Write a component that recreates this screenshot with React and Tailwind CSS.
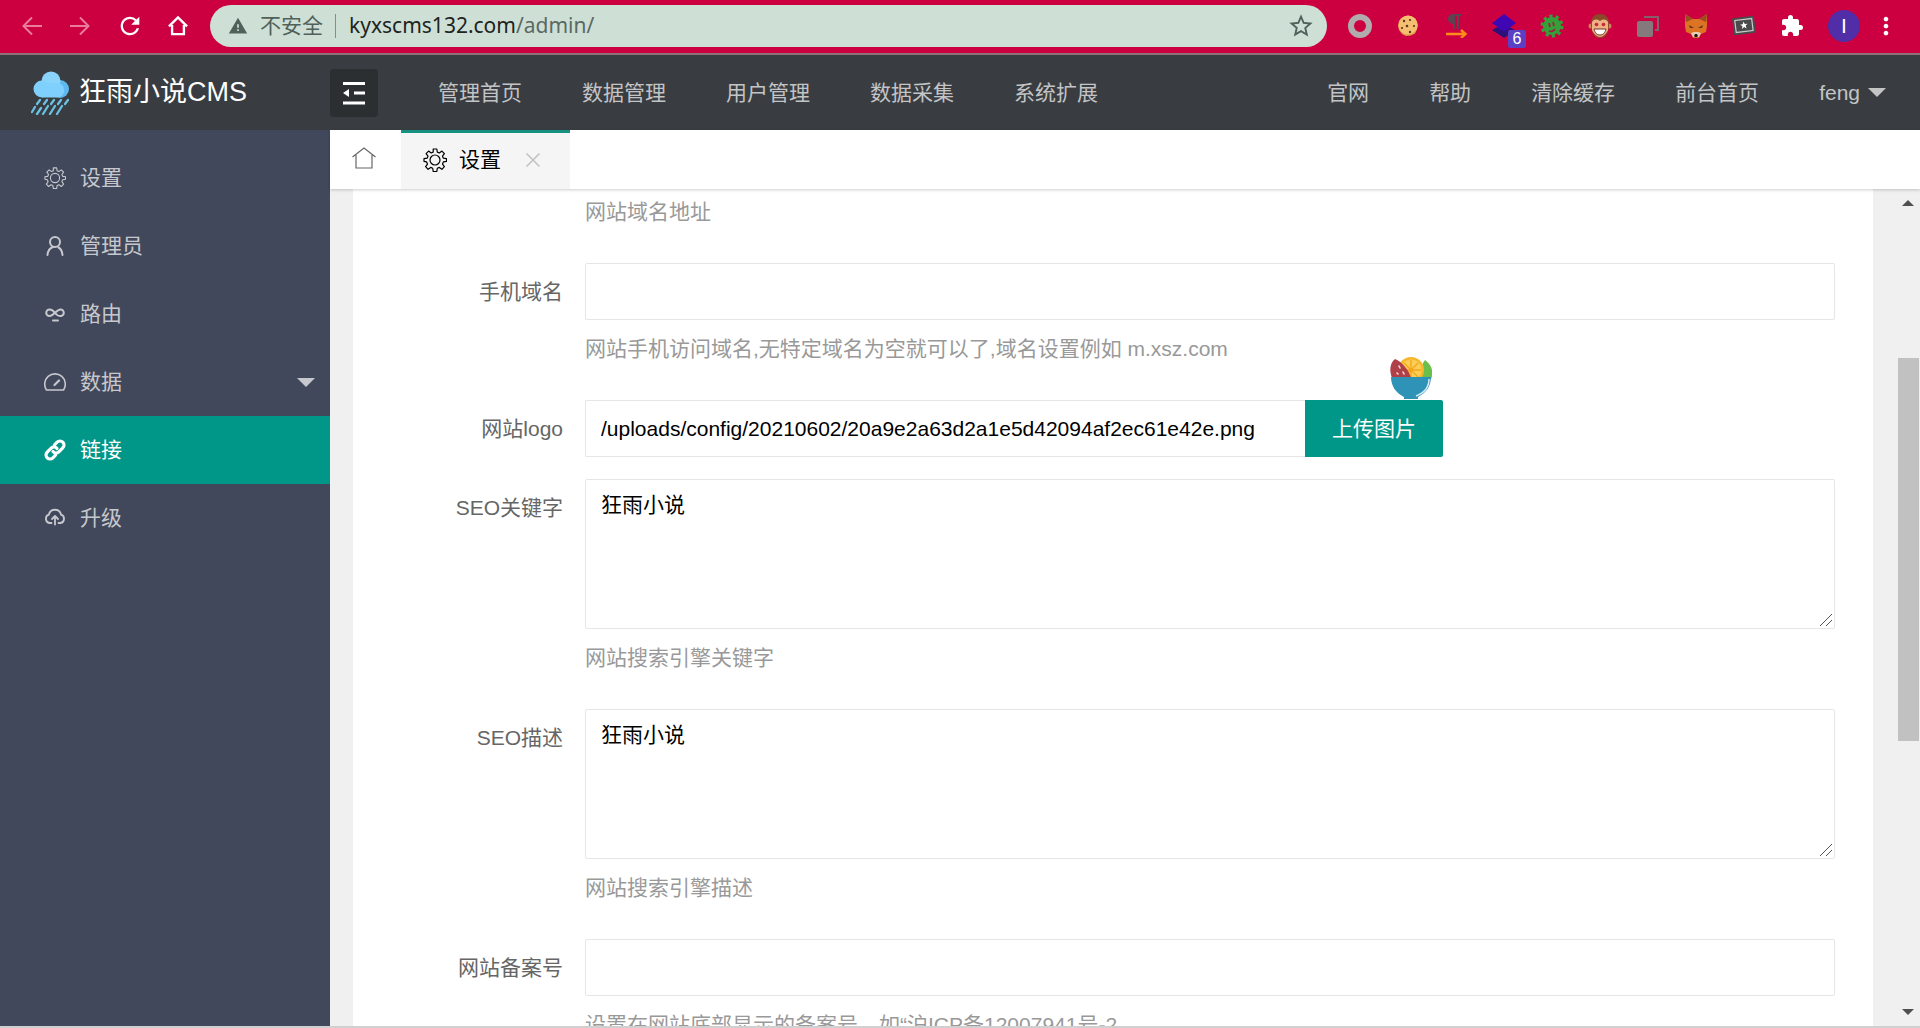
import React from 'react';
import { MdExtension, MdRefresh, MdStarBorder, MdWarning, MdMoreVert } from 'react-icons/md';

const topNav = ['管理首页', '数据管理', '用户管理', '数据采集', '系统扩展'];
const rightNav = ['官网', '帮助', '清除缓存', '前台首页'];

function GearIcon({ className }) {
  return (
    <svg viewBox="0 0 24 24" fill="none" stroke="currentColor" strokeWidth="1.2" className={className} aria-hidden="true">
      <circle cx="12" cy="12" r="5" />
      <path
        strokeLinejoin="round"
        d="M10.2 1h3.6l.5 3.1 2 .9 2.6-1.9 2.5 2.5-1.9 2.6.9 2 3.1.5v2.6l-3.1.6-.9 2.2 1.9 2.6-2.5 2.6-2.6-1.9-2 .9-.5 3.2h-3.6l-.5-3.2-2-.9-2.6 1.9-2.5-2.6 1.9-2.6-.9-2.2L1 13.3v-2.6l3.1-.5.9-2-1.9-2.6 2.5-2.5 2.6 1.9 2-.9z"
      />
    </svg>
  );
}

function AdminIcon({ className }) {
  return (
    <svg viewBox="0 0 22 22" fill="none" stroke="currentColor" strokeWidth="2" strokeLinecap="round" className={className} aria-hidden="true">
      <circle cx="11" cy="7" r="5" />
      <path d="M3.5 20c.4-4 2.3-7 5.5-8M18.5 20c-.4-4-2-6.5-4-7.5" />
    </svg>
  );
}

function RouteIcon({ className }) {
  return (
    <svg viewBox="0 0 22 22" fill="none" stroke="currentColor" strokeWidth="2" strokeLinecap="round" className={className} aria-hidden="true">
      <path d="M11 10C9 7 7.5 6.5 5.5 6.5a3.3 3.3 0 0 0 0 6.6c4 0 7-6.6 11-6.6a3.3 3.3 0 0 1 0 6.6c-2 0-3.5-.6-5.5-3.1" />
      <path d="M9 17.5h5" />
    </svg>
  );
}

function GaugeIcon({ className }) {
  return (
    <svg viewBox="0 0 22 22" fill="none" stroke="currentColor" strokeWidth="1.6" strokeLinecap="round" className={className} aria-hidden="true">
      <path d="M2.5 19A10.3 10.3 0 1 1 19.5 19z" strokeLinejoin="round" />
      <path d="M10.5 14l4.5-4.5" strokeWidth="2.2" />
    </svg>
  );
}

function ChainIcon({ className }) {
  return (
    <svg viewBox="0 0 22 22" fill="none" stroke="currentColor" strokeWidth="3.2" strokeLinecap="round" className={className} aria-hidden="true">
      <path d="M9 12.5a3.8 3.8 0 0 0 5.8.4l4-4a4 4 0 0 0-5.7-5.7l-2.6 2.6" />
      <path d="M13 9.5a3.8 3.8 0 0 0-5.8-.4l-4 4a4 4 0 0 0 5.7 5.7l2.6-2.6" />
    </svg>
  );
}

function CloudUpIcon({ className }) {
  return (
    <svg viewBox="0 0 22 22" fill="none" stroke="currentColor" strokeWidth="1.8" strokeLinecap="round" strokeLinejoin="round" className={className} aria-hidden="true">
      <path d="M7.5 16H5.5a4.3 4.3 0 0 1-.7-8.3 6.3 6.3 0 0 1 12.3 0 4.3 4.3 0 0 1-.6 8.3h-2" />
      <path d="M11 17.5V9M8 12l3-3 3 3" />
    </svg>
  );
}

function RainLogo() {
  return (
    <svg viewBox="0 0 40 44" className="h-11 w-10 shrink-0" aria-hidden="true">
      <circle cx="29" cy="18" r="9" fill="#5db9ee" />
      <circle cx="20" cy="10" r="9.5" fill="#8ad4fb" />
      <circle cx="11" cy="18" r="8.5" fill="#7fd0fc" />
      <path d="M11 12h15a7 7 0 0 1 0 14.5H11z" fill="#7fd0fc" />
      <g stroke="#6cc0e2" strokeWidth="2.3" strokeLinecap="round">
        <path d="M9 29l-3 4M16 29l-3 4M23 29l-3 4M30 29l-3 4M37 29l-3 4" />
        <path d="M4 36l-3 5M10 37l-4 6M17 35l-5 8M24 35l-5 8M31 35l-5 8" />
      </g>
    </svg>
  );
}

function FruitBowl({ className }) {
  return (
    <svg viewBox="0 0 42 43" className={className} aria-hidden="true">
      <path d="M35 4c7 5 9 12 6 19h-9c-2-9 0-15 3-19z" fill="#6bbf4b" />
      <circle cx="21" cy="14" r="13" fill="#f8b62b" />
      <circle cx="21" cy="14" r="10.5" fill="#fbcf56" />
      <path d="M21 4v20M11 14h20M14 7l14 14M28 7L14 21" stroke="#f4a51c" strokeWidth="1.3" />
      <path d="M5 3c7 3 14 11 16 19H2C-1 14 0 7 5 3z" fill="#b04048" />
      <path d="M9 10l1 2M7 17l1 1M13 16l1 2" stroke="#f6dada" strokeWidth="1.6" strokeLinecap="round" />
      <path d="M1 21h40c0 9-5 16-13 20v2H14v-2C6 37 1 30 1 21z" fill="#2f93b8" />
      <path d="M39 23c0 8-5 14-13 17" stroke="#d5edf6" strokeWidth="1.5" fill="none" />
    </svg>
  );
}

const sideMenu = [
  { icon: GearIcon, title: '设置' },
  { icon: AdminIcon, title: '管理员' },
  { icon: RouteIcon, title: '路由' },
  { icon: GaugeIcon, title: '数据', more: true },
  { icon: ChainIcon, title: '链接', active: true },
  { icon: CloudUpIcon, title: '升级' }
];

function BrowserBar() {
  return (
    <div className="flex h-[55px] shrink-0 items-center border-b-2 border-[#8d7279] bg-[#cc0040] pb-1 pt-[3px] text-white">
      <div className="flex items-center gap-6 pl-5 pr-[22px]">
        <button aria-label="Back" className="text-[#eb7b9c]">
          <svg viewBox="0 0 24 24" className="h-6 w-6" fill="none" stroke="currentColor" strokeWidth="2">
            <path d="M22 12H4M12 3.5L3.5 12l8.5 8.5" />
          </svg>
        </button>
        <button aria-label="Forward" className="text-[#eb7b9c]">
          <svg viewBox="0 0 24 24" className="h-6 w-6" fill="none" stroke="currentColor" strokeWidth="2">
            <path d="M2 12h18M12 3.5l8.5 8.5-8.5 8.5" />
          </svg>
        </button>
        <button aria-label="Reload">
          <MdRefresh className="h-7 w-7" />
        </button>
        <button aria-label="Home">
          <svg viewBox="0 0 22 22" className="h-6 w-5" fill="none" stroke="currentColor" strokeWidth="2.6">
            <path d="M1 11.5L11 1.5l10 10M4.5 10v10h13V10" />
          </svg>
        </button>
      </div>

      <div className="flex h-[42px] flex-1 items-center rounded-full bg-[#cee0d6] pl-[18px] pr-3">
        <MdWarning className="h-5 w-5 text-[#50605a]" />
        <span className="ml-3 text-[#50605a]">不安全</span>
        <span className="ml-3 mr-[13px] h-6 w-px bg-[#82908a]" />
        <span className="flex-1 font-['Noto_Sans','Noto_Sans_CJK_SC',sans-serif] text-[#1d2421]">
          kyxscms132.com<span className="text-[#5b6963]">/admin/</span>
        </span>
        <button aria-label="Bookmark" className="text-[#50605a]">
          <MdStarBorder className="h-7 w-7" />
        </button>
      </div>

      <div className="flex items-center gap-6 pl-[21px] pr-5">
        <svg viewBox="0 0 24 24" className="h-6 w-6">
          <circle cx="12" cy="12" r="9" fill="none" stroke="#b1abae" strokeWidth="6" />
        </svg>
        <svg viewBox="0 0 24 24" className="h-6 w-6">
          <path d="M12 1.5l4 1 3 2 2 3 1 4-1 4-2 4-4 2-5 .5-4-2-3-4-1-4 1-5 4-4z" fill="#e09a48" />
          <circle cx="12" cy="11" r="9.5" fill="#f5bf72" />
          <g fill="#60351c">
            <circle cx="8" cy="7" r="1.2" />
            <circle cx="14" cy="6" r="1.1" />
            <circle cx="18" cy="12" r="1.1" />
            <circle cx="11" cy="12" r="1.3" />
            <circle cx="6" cy="14" r="1.1" />
            <circle cx="14" cy="18" r="1.2" />
          </g>
        </svg>
        <svg viewBox="0 0 24 24" className="h-6 w-6">
          <path d="M17 0H9a5 5 0 0 0 0 10v5h2V2h2v13h2V2h2z" fill="#5b4350" />
          <path d="M2 20h19M17 16l4.5 4-4.5 4" fill="none" stroke="#ff8c1a" strokeWidth="2.4" />
        </svg>
        <span className="relative">
          <svg viewBox="0 0 24 24" className="h-6 w-6">
            <path d="M0 16l11-6 12 6-11 8z" fill="#2d1178" />
            <path d="M0 9l12-9 12 9-12 9z" fill="#3f06b4" />
          </svg>
          <span className="absolute left-4 top-4 flex h-[18px] w-[18px] items-center justify-center rounded-xs bg-[#5b3fc4] text-base leading-none">
            6
          </span>
        </span>
        <svg viewBox="0 0 24 24" className="h-6 w-6">
          <circle cx="12" cy="12" r="9" fill="#35a03a" />
          <circle cx="12" cy="12" r="9.5" fill="none" stroke="#35a03a" strokeWidth="4" strokeDasharray="3 3" />
          <path d="M9 9l1 4M13 8l1 4M9 17c2 1 5 0 6-2" fill="none" stroke="#a3203c" strokeWidth="1.8" />
        </svg>
        <svg viewBox="0 0 24 24" className="h-6 w-6">
          <circle cx="3" cy="12" r="2.5" fill="#c98559" />
          <circle cx="21" cy="12" r="2.5" fill="#c98559" />
          <path d="M12 0c6 0 9 4 9 10 0 8-3 14-9 14S3 18 3 10C3 4 6 0 12 0z" fill="#8a4a2a" />
          <path d="M4 8c2-3 5-3 8-1 3-2 6-2 8 1v8c-2 4-5 7-8 7s-6-3-8-7z" fill="#edb183" />
          <path d="M6 15h12c-1 4-3 6-6 6s-5-2-6-6z" fill="#fff" stroke="#7a3324" />
          <circle cx="8.5" cy="10.5" r="1.8" fill="#c2273a" />
          <circle cx="15.5" cy="10.5" r="1.8" fill="#c2273a" />
        </svg>
        <svg viewBox="0 0 24 24" className="h-6 w-6">
          <path d="M8 3h14v13h-3" fill="none" stroke="#85606b" strokeWidth="2" />
          <rect x="1" y="7" width="16" height="16" rx="2" fill="#84797d" />
        </svg>
        <svg viewBox="0 0 24 24" className="h-6 w-6">
          <path d="M1 0l8 5h6l8-5v12l-1 6-5 2-2 4H9l-2-4-5-2-1-6z" fill="#dc7423" />
          <path d="M1 0l8 5-7 3zM23 0l-8 5 7 3z" fill="#9a4b22" />
          <path d="M5 11l5 3H6zM19 11l-5 3h4z" fill="#5a3422" />
          <path d="M7 19l3-1h4l3 1-2 4H9z" fill="#e9cdb4" />
          <path d="M11 20h2l1 2-1 1h-2l-1-1z" fill="#211c1b" />
        </svg>
        <svg viewBox="0 0 24 24" className="h-6 w-6">
          <g transform="rotate(-7 12 12)">
            <rect x="1" y="3" width="22" height="17" rx="1" fill="#4a4a4d" />
            <rect x="3.5" y="5.5" width="17" height="12" fill="none" stroke="#c9c9c9" strokeWidth="1.2" />
            <path d="M12 7.5l1 2.7h2.8l-2.2 1.7.8 2.8L12 13l-2.4 1.7.8-2.8-2.2-1.7H11z" fill="#fff" />
          </g>
        </svg>
        <button aria-label="Extensions">
          <MdExtension className="h-6 w-6" />
        </button>
        <button className="flex h-8 w-8 items-center justify-center rounded-full bg-[#512da8]">I</button>
        <button aria-label="Menu" className="-ml-3">
          <MdMoreVert className="h-7 w-7" />
        </button>
      </div>
    </div>
  );
}

function Header() {
  return (
    <header className="flex h-[75px] shrink-0 items-center bg-[#393d41] text-[#c3c4c6]">
      <div className="flex w-[330px] shrink-0 items-center gap-2 pl-[31px] text-[27px] text-white">
        <RainLogo />
        <a href="#">狂雨小说CMS</a>
      </div>
      <button aria-label="Toggle menu" className="flex h-12 w-12 items-center justify-center rounded-sm bg-[#2b2f32] text-white">
        <svg viewBox="0 0 24 24" className="h-6 w-6" fill="none" stroke="currentColor" strokeWidth="3">
          <path d="M1 2.5h22M12 12h11M1 22h22" />
          <path d="M1 12l6-4v8z" fill="currentColor" stroke="none" />
        </svg>
      </button>
      <nav className="ml-[30px] flex flex-1">
        {topNav.map((item) => (
          <a key={item} href="#" className="px-[30px]">{item}</a>
        ))}
      </nav>
      <nav className="flex pr-1">
        {rightNav.map((item) => (
          <a key={item} href="#" className="px-[30px]">{item}</a>
        ))}
        <a href="#" className="flex items-center gap-2 px-[30px]">
          feng
          <span className="border-x-9 border-t-9 border-x-transparent border-t-[#c3c4c6]" />
        </a>
      </nav>
    </header>
  );
}

function Sidebar() {
  return (
    <aside className="w-[330px] shrink-0 bg-[#42485b] pt-[14px] text-[#c6c8ce]">
      {sideMenu.map((item) => (
        <a
          key={item.title}
          href="#"
          className={
            item.active
              ? 'flex h-[68px] items-center bg-[#009688] pl-[44px] pr-[15px] text-white'
              : 'flex h-[68px] items-center pl-[44px] pr-[15px]'
          }
        >
          <item.icon className="mr-[14px] h-[22px] w-[22px]" />
          <span className="flex-1">{item.title}</span>
          {item.more && <span className="border-x-9 border-t-9 border-x-transparent border-t-[#c6c8ce]" />}
        </a>
      ))}
    </aside>
  );
}

function Tabs() {
  return (
    <div className="relative z-10 flex h-[59px] shrink-0 bg-white text-black shadow-[0_1px_3px_rgba(0,0,0,0.2)]">
      <button aria-label="Home" className="flex w-[71px] items-center justify-center pb-1 pr-1 text-[#666]">
        <svg viewBox="0 0 24 24" className="h-6 w-6" fill="none" stroke="currentColor" strokeWidth="1.2">
          <path d="M.5 11L12 2l11.5 9M4 9v13h16V9" />
        </svg>
      </button>
      <div className="flex items-center border-t-3 border-[#189280] bg-[#f5f5f5] pb-[3px] pl-[22px] pr-[29px]">
        <GearIcon className="mr-3 h-6 w-6" />
        <span>设置</span>
        <button aria-label="Close tab" className="ml-6 text-[#c2c2c2]">
          <svg viewBox="0 0 16 16" className="h-4 w-4" fill="none" stroke="currentColor" strokeWidth="1.6">
            <path d="M1.5 1.5l13 13M14.5 1.5l-13 13" />
          </svg>
        </button>
      </div>
    </div>
  );
}

function FormRow({ id, label, hint, children }) {
  return (
    <div className="mb-[22px] flex">
      <label htmlFor={id} className="h-[57px] w-[232px] shrink-0 pr-[22px] text-right leading-[57px] text-[#666]">
        {label}
      </label>
      <div className="min-w-0 flex-1">
        {children}
        {hint && <p className="h-[58px] leading-[58px] text-[#999]">{hint}</p>}
      </div>
    </div>
  );
}

const inputClass = 'block h-[57px] w-full rounded-xs border border-[#e6e6e6] bg-white px-[15px] text-black outline-none';

function TextArea({ id, value }) {
  return (
    <div className="relative">
      <textarea
        id={id}
        defaultValue={value}
        className="block h-[150px] w-full resize-none rounded-xs border border-[#e6e6e6] bg-white px-[15px] py-[9px] leading-8 text-black outline-none"
      />
      <svg viewBox="0 0 12 12" className="absolute bottom-[3px] right-[3px] h-3 w-3" stroke="#555" aria-hidden="true">
        <path d="M0 12L12 0M6 12l6-6" />
      </svg>
    </div>
  );
}

function SettingsForm() {
  return (
    <form className="mx-[23px] flex-1 bg-white pr-[38px]">
      <p className="mb-[22px] h-[52px] pl-[232px] leading-[46px] text-[#999]">网站域名地址</p>

      <FormRow id="mobile" label="手机域名" hint="网站手机访问域名,无特定域名为空就可以了,域名设置例如 m.xsz.com">
        <input id="mobile" type="text" className={inputClass} />
      </FormRow>

      <FormRow id="logo" label="网站logo">
        <div className="relative flex">
          <input
            id="logo"
            type="text"
            defaultValue="/uploads/config/20210602/20a9e2a63d2a1e5d42094af2ec61e42e.png"
            className="h-[57px] w-[720px] rounded-l-xs border border-r-0 border-[#e6e6e6] px-[15px] text-black outline-none"
          />
          <button type="button" className="h-[57px] rounded-r-xs bg-[#009688] px-[27px] text-white">
            上传图片
          </button>
          <FruitBowl className="absolute -top-11 left-[805px] h-[43px] w-[42px]" />
        </div>
      </FormRow>

      <FormRow id="keywords" label="SEO关键字" hint="网站搜索引擎关键字">
        <TextArea id="keywords" value="狂雨小说" />
      </FormRow>

      <FormRow id="description" label="SEO描述" hint="网站搜索引擎描述">
        <TextArea id="description" value="狂雨小说" />
      </FormRow>

      <FormRow id="icp" label="网站备案号" hint="设置在网站底部显示的备案号，如“沪ICP备12007941号-2">
        <input id="icp" type="text" className={inputClass} />
      </FormRow>
    </form>
  );
}

function ScrollBar() {
  return (
    <div className="flex w-6 shrink-0 flex-col items-center py-[11px]">
      <span className="border-x-6 border-b-6 border-x-transparent border-b-[#505050]" />
      <span className="mt-[152px] h-[47%] w-[21px] bg-[#c1c1c1]" />
      <span className="mt-auto border-x-6 border-t-6 border-x-transparent border-t-[#505050]" />
    </div>
  );
}

export default function App() {
  return (
    <div className="flex h-screen flex-col overflow-hidden font-['Liberation_Sans','Noto_Sans_CJK_SC',sans-serif] text-[21px]">
      <BrowserBar />
      <Header />
      <div className="flex min-h-0 flex-1 border-b-2 border-[#d0d0d0]">
        <Sidebar />
        <main className="flex min-w-0 flex-1 flex-col">
          <Tabs />
          <div className="flex min-h-0 flex-1 overflow-hidden bg-[#f0f0f0]">
            <SettingsForm />
            <ScrollBar />
          </div>
        </main>
      </div>
    </div>
  );
}
